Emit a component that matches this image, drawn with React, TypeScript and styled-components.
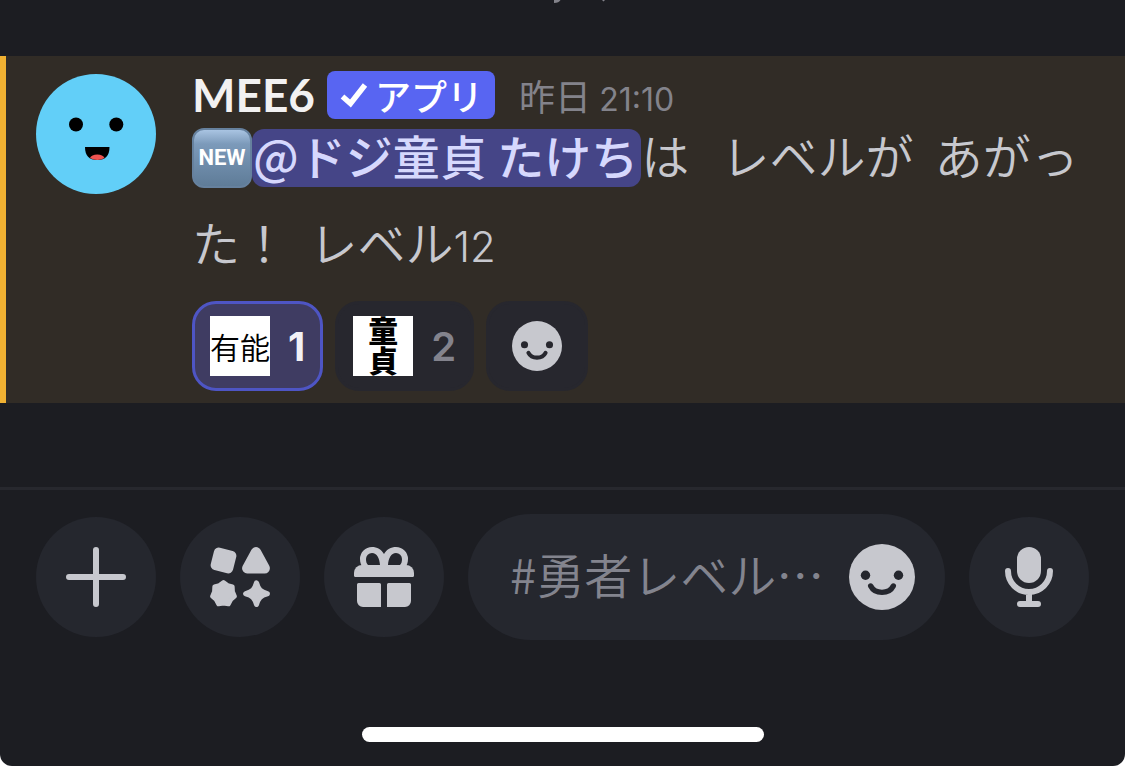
import React from "react";
import styled, { createGlobalStyle } from "styled-components";

const Global = createGlobalStyle`
  * { box-sizing: border-box; }
  body { margin: 0; background: #ffffff; }
  button, input { font: inherit; border: 0; padding: 0; }
  button { cursor: pointer; }
`;

const jp = `"Noto Sans CJK JP", sans-serif`;
const latin = `Inter, "Noto Sans CJK JP", sans-serif`;

const Screen = styled.div`
  display: flex;
  flex-direction: column;
  min-height: 100vh;
  overflow: hidden;
  border-radius: 0 0 12px 12px;
  background: #1c1d22;
  color: #c7c8ce;
  font-family: ${jp};
`;

const DateDivider = styled.div`
  display: flex;
  justify-content: center;
  height: 56px;
`;

const Message = styled.article`
  display: flex;
  gap: 36px;
  padding: 12px 36px 12px 30px;
  border-left: 6px solid #f0b132;
  background: #312c26;
`;

const Avatar = styled.svg`
  flex: none;
  width: 120px;
  height: 120px;
  margin-top: 6px;
`;

const Content = styled.div`
  flex: 1;
  min-width: 0;
`;

const Header = styled.header`
  display: flex;
  align-items: center;
  height: 54px;
`;

const Author = styled.h2`
  margin: 0 12px 0 0;
  color: #f2f1f1;
  font-family: Lato, sans-serif;
  font-size: 46px;
  font-weight: 700;
  line-height: 54px;
`;

const AppTag = styled.span`
  display: flex;
  align-items: center;
  gap: 6px;
  height: 48px;
  padding: 0 12px;
  border-radius: 8px;
  background: #5865f2;
  color: #ffffff;
  font-size: 36px;
  font-weight: 500;
  line-height: 44px;
`;

const Time = styled.time`
  margin-left: 24px;
  color: #83838b;
  font-size: 36px;
  line-height: 54px;
`;

const Digits = styled.span<{ $size: number }>`
  font-family: ${latin};
  font-size: ${(p) => p.$size}px;
  line-height: 1;
`;

const Body = styled.p`
  margin: -11px 0 16px;
  font-size: 48px;
  font-weight: 350;
  line-height: 87px;
`;

const NewBadge = styled.span`
  display: inline-block;
  width: 60px;
  height: 60px;
  margin-top: 17px;
  border: 2px solid #66819e;
  border-radius: 12px;
  background: linear-gradient(#a9c4e2, #7c9aba 25%, #5f7c98);
  color: #ffffff;
  font-family: Roboto, sans-serif;
  font-size: 22px;
  font-weight: 700;
  line-height: 56px;
  text-align: center;
  vertical-align: top;
`;

const Mention = styled.a`
  display: inline-block;
  height: 58px;
  margin-top: 18px;
  padding: 0 3px 0 1px;
  border-radius: 12px;
  background: #454587;
  color: #d6d8fd;
  font-size: 47px;
  font-weight: 500;
  line-height: 52px;
  text-decoration: none;
  vertical-align: top;
`;

const Reactions = styled.div`
  display: flex;
  gap: 12px;
`;

const Reaction = styled.button<{ $active?: boolean; $wide?: boolean }>`
  display: flex;
  align-items: center;
  justify-content: center;
  gap: 18px;
  height: 90px;
  padding: 0 ${(p) => (p.$wide ? 23 : 15)}px;
  border: 3px solid ${(p) => (p.$active ? "#4e55c4" : "#27272e")};
  border-radius: 24px;
  background: ${(p) => (p.$active ? "#3f3c62" : "#27272e")};
  color: ${(p) => (p.$active ? "#f2f1f5" : "#83838d")};
  font-family: ${latin};
  font-size: 40px;
  font-weight: ${(p) => (p.$active ? 700 : 600)};
`;

const Sticker = styled.span<{ $brush?: boolean }>`
  display: flex;
  align-items: center;
  justify-content: center;
  width: 60px;
  height: 60px;
  overflow: hidden;
  background: #ffffff;
  color: #000000;
  font-family: ${jp};
  font-size: 30px;
  font-weight: ${(p) => (p.$brush ? 900 : 350)};
  line-height: 30px;
  writing-mode: ${(p) => (p.$brush ? "vertical-rl" : "horizontal-tb")};
`;

const Composer = styled.form`
  display: flex;
  align-items: center;
  gap: 24px;
  margin-top: 84px;
  padding: 24px 36px;
  border-top: 3px solid #27282e;
`;

const RoundButton = styled.button`
  display: grid;
  flex: none;
  place-items: center;
  width: 120px;
  height: 120px;
  border-radius: 50%;
  background: #25272e;
  color: #c7c8ce;
`;

const Field = styled.div`
  display: flex;
  flex: 1;
  align-items: center;
  gap: 12px;
  min-width: 0;
  height: 126px;
  padding: 0 30px 0 42px;
  border-radius: 63px;
  background: #25272e;
`;

const TextInput = styled.input`
  flex: 1;
  min-width: 0;
  height: 84px;
  padding-bottom: 8px;
  outline: 0;
  background: transparent;
  color: #c7c8ce;
  font-family: ${jp};
  font-size: 48px;
  font-weight: 350;
  &::placeholder {
    color: #83848e;
    opacity: 1;
  }
`;

const PlainButton = styled.button`
  display: grid;
  flex: none;
  background: transparent;
  color: #c7c8ce;
`;

const HomeBar = styled.div`
  width: 402px;
  height: 15px;
  margin: auto auto 24px;
  border-radius: 8px;
  background: #ffffff;
`;

const Smiley = ({ size, hole }: { size: number; hole: string }) => (
  <svg width={size} height={size} viewBox="0 0 66 66" aria-hidden="true">
    <circle cx="33" cy="33" r="33" fill="#c7c8ce" />
    <circle cx="16.5" cy="31.3" r="4.7" fill={hole} />
    <circle cx="49.5" cy="31.3" r="4.7" fill={hole} />
    <path d="M21.7 42C26 50.5 40 50.5 44.3 42" fill="none" stroke={hole} strokeWidth="5.4" strokeLinecap="round" />
  </svg>
);

const burst = Array.from({ length: 14 }, (_, i) => {
  const angle = (i * Math.PI) / 7 - Math.PI / 2;
  const radius = i % 2 ? 9.4 : 11.4;
  return `${13.5 + radius * Math.cos(angle)},${46.8 + radius * Math.sin(angle)}`;
}).join(" ");

const ShapesIcon = () => (
  <svg width="60" height="60" viewBox="0 0 60 60" fill="currentColor" stroke="currentColor" strokeLinejoin="round" aria-hidden="true">
    <rect x="2" y="2" width="23" height="23" rx="5" stroke="none" transform="rotate(14 13.5 13.5)" />
    <path d="M46 5.3 37.3 21.2H54.7Z" strokeWidth="10.4" />
    <polygon points={burst} strokeWidth="4.5" />
    <path d="M46.5 36C48.3 42.5 50.5 44.8 57.3 46.7C50.5 48.6 48.3 50.9 46.5 57.4C44.7 50.9 42.5 48.6 35.7 46.7C42.5 44.8 44.7 42.5 46.5 36Z" strokeWidth="5.2" />
  </svg>
);

const GiftIcon = () => (
  <svg width="60" height="60" viewBox="0 0 60 60" fill="currentColor" aria-hidden="true">
    <path
      fillRule="evenodd"
      d="M9 21C7 18 6 15.5 6 12A12 12 0 0 1 18 0C23 0 27.500 2.500 30 7C32.500 2.500 37 0 42 0A12 12 0 0 1 54 12C54 15.500 53 18 51 21ZM14 18H26C25.500 11 23 6 18 6A6 6 0 0 0 12 12C12 14.500 12.500 16.500 14 18ZM46 18H34C34.500 11 37 6 42 6A6 6 0 0 1 48 12C48 14.500 47.500 16.500 46 18Z"
    />
    <path d="M8 18H52A8 8 0 0 1 60 26V28.5A1.5 1.5 0 0 1 58.5 30H1.5A1.5 1.5 0 0 1 0 28.5V26A8 8 0 0 1 8 18Z" />
    <path d="M4.5 36H25.5A1.5 1.5 0 0 1 27 37.5V60H9A6 6 0 0 1 3 54V37.5A1.5 1.5 0 0 1 4.5 36ZM34.5 36H55.5A1.5 1.5 0 0 1 57 37.5V54A6 6 0 0 1 51 60H33V37.5A1.5 1.5 0 0 1 34.5 36Z" />
  </svg>
);

const MicIcon = () => (
  <svg width="48" height="60" viewBox="0 0 48 60" aria-hidden="true">
    <rect x="12" width="24" height="36" rx="12" fill="currentColor" />
    <path d="M3 24A21 21 0 0 0 45 24M24 45V57M15 57H33" fill="none" stroke="currentColor" strokeWidth="6" strokeLinecap="round" />
  </svg>
);

export default function App() {
  return (
    <Screen>
      <Global />
      <DateDivider>
        <svg width="90" height="4" viewBox="0 0 90 4" aria-hidden="true">
          <path d="M36 0H42.5Q41 3 36 3ZM84 0H87L85.5 1.5Z" fill="#83838b" />
        </svg>
      </DateDivider>
      <Message>
        <Avatar viewBox="0 0 120 120" role="img" aria-label="MEE6">
          <circle cx="60" cy="60" r="60" fill="#62cff8" />
          <circle cx="40" cy="50.5" r="7" fill="#000" />
          <circle cx="80.3" cy="50.5" r="7" fill="#000" />
          <path d="M49 73H73.5Q73.5 86 61.3 86Q49 86 49 73Z" fill="#000" />
          <path d="M54 84Q55.5 80.5 61.3 80.5Q67 80.5 68.5 84Q65 86 61.3 86Q57.5 86 54 84Z" fill="#ef5350" />
        </Avatar>
        <Content>
          <Header>
            <Author>MEE6</Author>
            <AppTag>
              <svg width="30" height="30" viewBox="0 0 30 30" aria-hidden="true">
                <path d="M3.5 16.5 11.5 23.5 26 5" fill="none" stroke="#fff" strokeWidth="5.5" />
              </svg>
              アプリ
            </AppTag>
            <Time>
              昨日 <Digits $size={32}>21:10</Digits>
            </Time>
          </Header>
          <Body>
            <NewBadge>NEW</NewBadge>
            <Mention href="#mention">@ドジ童貞 たけち</Mention>
            は&nbsp;&nbsp; レベルが&nbsp; あがった！&nbsp; レベル<Digits $size={42}>12</Digits>
          </Body>
          <Reactions>
            <Reaction type="button" $active>
              <Sticker>有能</Sticker>1
            </Reaction>
            <Reaction type="button">
              <Sticker $brush>童貞</Sticker>2
            </Reaction>
            <Reaction type="button" $wide aria-label="リアクションを追加">
              <Smiley size={50} hole="#27272e" />
            </Reaction>
          </Reactions>
        </Content>
      </Message>
      <Composer>
        <RoundButton type="button" aria-label="追加">
          <svg width="60" height="60" viewBox="0 0 60 60" aria-hidden="true">
            <path d="M30 3V57M3 30H57" stroke="currentColor" strokeWidth="6" strokeLinecap="round" />
          </svg>
        </RoundButton>
        <RoundButton type="button" aria-label="アプリ">
          <ShapesIcon />
        </RoundButton>
        <RoundButton type="button" aria-label="ギフト">
          <GiftIcon />
        </RoundButton>
        <Field>
          <TextInput type="text" aria-label="メッセージ" placeholder="#勇者レベル…" />
          <PlainButton type="button" aria-label="絵文字">
            <Smiley size={66} hole="#25272e" />
          </PlainButton>
        </Field>
        <RoundButton type="button" aria-label="ボイスメッセージ">
          <MicIcon />
        </RoundButton>
      </Composer>
      <HomeBar />
    </Screen>
  );
}
